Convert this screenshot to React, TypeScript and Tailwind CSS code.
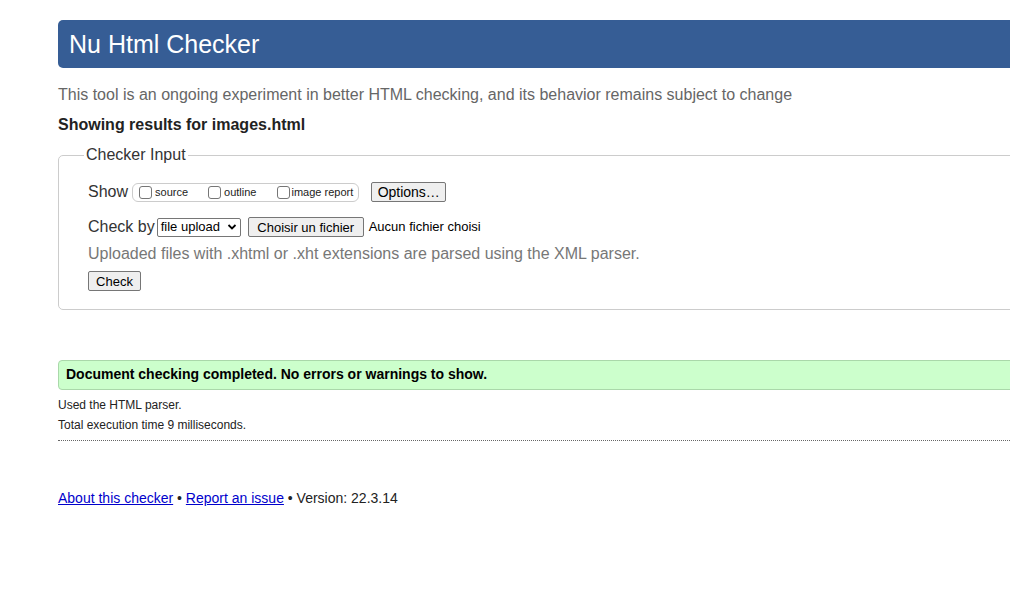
import React from "react";

const btn =
  "bg-[#efefef] border border-[#767676] rounded-[2px] text-black leading-none";

const box = "w-[13px] h-[13px] border border-[#767676] rounded-[3px] bg-white";

const App = () => {
  return (
    <div
      className="w-[1010px] h-[594px] overflow-hidden bg-white text-[#222]"
      style={{ fontFamily: '"Liberation Sans", Arial, sans-serif' }}
    >
      <div className="ml-[58px] w-[1000px] pt-[20px]">
        <h1 className="h-[48px] bg-[#365d95] rounded-l-[5px] flex items-center pl-[11px] text-white text-[25px] leading-none">
          Nu Html Checker
        </h1>

        <p className="mt-[18px] text-[16px] leading-[18px] text-[#666]">
          This tool is an ongoing experiment in better HTML checking, and its behavior remains subject to change
        </p>
        <p className="mt-[12px] text-[16px] leading-[18px] font-bold text-[#222]">
          Showing results for images.html
        </p>

        <fieldset className="mt-[12px] border border-[#ccc] rounded-[5px] pl-[29px] pr-4 pb-[16px] pt-[10px]">
          <legend className="-ml-[4px] px-[2px] text-[16px] text-[#333] leading-[18px]">
            Checker Input
          </legend>

          <div className="flex items-center h-[20px] mt-[8px]">
            <span className="text-[16px] text-[#333] mr-[4px]">Show</span>
            <div className="flex items-center h-[19px] border border-[#ccc] rounded-[6px] pl-[6px] pr-[5px] text-[11px] text-[#222]">
              <label className="flex items-center mr-[20px]">
                <span className={`${box} mr-[3px]`} />
                source
              </label>
              <label className="flex items-center mr-[21px]">
                <span className={`${box} mr-[3px]`} />
                outline
              </label>
              <label className="flex items-center">
                <span className={`${box} mr-[1px]`} />
                image report
              </label>
            </div>
            <button className={`${btn} ml-[12px] w-[75px] h-[20px] text-[14px]`}>Options…</button>
          </div>

          <div className="flex items-center h-[20px] mt-[15px]">
            <span className="text-[16px] text-[#333] mr-[2px]">Check by</span>
            <div className="flex items-center h-[19px] w-[84px] border border-[#767676] rounded-[2px] pl-[3px] pr-[3px] text-[13px] text-black">
              <span className="flex-1">file upload</span>
              <svg width="10" height="8" viewBox="0 0 10 8">
                <path d="M1.5 2 L5 5.5 L8.5 2" fill="none" stroke="#000" strokeWidth="1.8" />
              </svg>
            </div>
            <button className={`${btn} ml-[7px] w-[116px] h-[20px] text-[13px]`}>Choisir un fichier</button>
            <span className="ml-[5px] text-[13px] text-black">Aucun fichier choisi</span>
          </div>

          <p className="mt-[8px] text-[16px] leading-[18px] text-[#777]">
            Uploaded files with .xhtml or .xht extensions are parsed using the XML parser.
          </p>

          <button className={`${btn} mt-[8px] w-[53px] h-[20px] text-[13px]`}>Check</button>
        </fieldset>

        <div className="mt-[50px] h-[30px] bg-[#ccffcc] border border-[#aad8aa] rounded-l-[4px] flex items-center pl-[7px] text-[14px] font-bold text-black">
          Document checking completed. No errors or warnings to show.
        </div>

        <p className="mt-[8px] text-[12px] leading-[14px] text-[#222]">Used the HTML parser.</p>
        <p className="mt-[6px] text-[12px] leading-[14px] text-[#222]">Total execution time 9 milliseconds.</p>
        <div className="mt-[8px] border-t border-dotted border-[#666]" />

        <p className="mt-[49px] text-[14px] leading-[16px] text-[#222]">
          <a className="text-[#00c] underline" href="#">About this checker</a>
          {" • "}
          <a className="text-[#00c] underline" href="#">Report an issue</a>
          {" • Version: 22.3.14"}
        </p>
      </div>
    </div>
  );
};

export default App;
